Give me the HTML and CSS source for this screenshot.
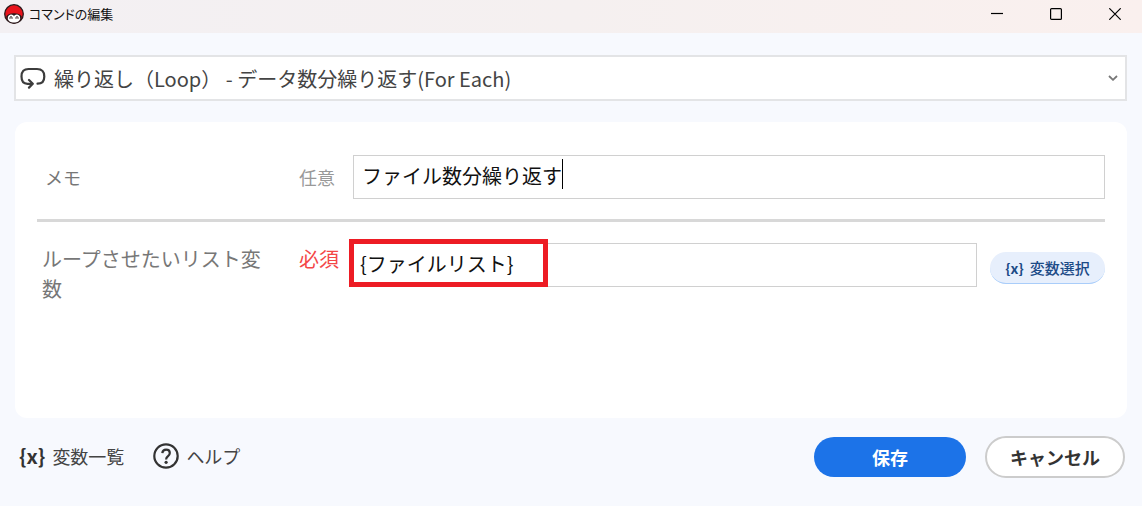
FILE: index.html
```html
<!DOCTYPE html>
<html lang="ja">
<head>
    <meta charset="UTF-8">
    <meta name="viewport" content="width=device-width, initial-scale=1.0">
    <title>コマンドの編集</title>
    <link rel="stylesheet" href="styles.css">
</head>
<body>
    <header class="titlebar">
        <svg class="app-icon" viewBox="0 0 20 20" aria-hidden="true">
            <circle cx="10" cy="10" r="9.3" fill="#e9141d" stroke="#2b1a1c" stroke-width="1.3"/>
            <path d="M2.200 12.500C4 10.400 6 9.300 10 9.300s6 1.100 7.800 3.200C17.200 16.500 14 19.300 10 19.300s-7.200-2.800-7.800-6.800z" fill="#2b1a1c"/>
            <path d="M3.800 14.200c0-4.600 5.300-4.800 6.200-1.900.9-2.900 6.200-2.700 6.200 1.900 0 2.700-3 4.300-6.200 4.300s-6.200-1.600-6.200-4.300z" fill="#fff"/>
            <path d="M6 14.800v-1.100c0-1.500 2-1.500 2 0v1.100M12 14.800v-1.100c0-1.500 2-1.500 2 0v1.100" fill="none" stroke="#2b1a1c"/>
        </svg>
        <h1 class="titlebar-text">コマンドの編集</h1>
        <div class="window-controls">
            <button type="button" class="window-button" aria-label="最小化">
                <svg viewBox="0 0 12 12"><path d="M0 5.500h12"/></svg>
            </button>
            <button type="button" class="window-button" aria-label="最大化">
                <svg viewBox="0 0 12 12"><rect x=".6" y=".6" width="10.800" height="10.800" rx="1"/></svg>
            </button>
            <button type="button" class="window-button" aria-label="閉じる">
                <svg viewBox="0 0 12 12"><path d="M.3.3l11.400 11.400M11.700.3L.3 11.700"/></svg>
            </button>
        </div>
    </header>

    <main class="content">
        <div class="command-select">
            <svg class="loop-icon" viewBox="0 0 26 22" aria-hidden="true">
                <path d="M12 16.800H7.500C3.600 16.800 1.500 14 1.500 9.500 1.500 4.500 4 2 8.500 2h8.500c4.700 0 7.300 2.600 7.300 7.400 0 4.600-2.300 7.300-6.800 7.300"/>
                <path d="M9 13l3.800 3.800L9 20.600"/>
            </svg>
            <select class="command-list" aria-label="コマンド">
                <option>繰り返し（Loop） - データ数分繰り返す(For Each)</option>
            </select>
            <svg class="chevron" viewBox="0 0 10 6" aria-hidden="true"><path d="M1 1l4 3.800L9 1"/></svg>
        </div>

        <section class="card">
            <div class="field-row memo-row">
                <label class="field-label" for="memo">メモ</label>
                <span class="field-tag">任意</span>
                <div class="input-wrap">
                    <input class="field-input" id="memo" type="text" value="ファイル数分繰り返す">
                    <span class="caret"></span>
                </div>
            </div>
            <hr class="divider">
            <div class="field-row list-row">
                <label class="field-label" for="list-variable">ループさせたいリスト変数</label>
                <span class="field-tag required">必須</span>
                <div class="input-wrap">
                    <input class="field-input" id="list-variable" type="text" value="{ファイルリスト}">
                    <span class="highlight"></span>
                </div>
                <button type="button" class="variable-button"><span class="braces">{x}</span>変数選択</button>
            </div>
        </section>

        <footer class="footer">
            <button type="button" class="link-button"><span class="braces">{x}</span>変数一覧</button>
            <button type="button" class="link-button help-button">
                <svg class="help-icon" viewBox="0 0 26 26" aria-hidden="true">
                    <circle cx="13" cy="13" r="11.700"/>
                    <path d="M9.300 10.200c.2-2.200 1.700-3.500 3.800-3.500 2.200 0 3.700 1.300 3.700 3.200 0 1.500-.8 2.300-1.800 3.200-1.200 1-1.900 1.700-1.900 3.300"/>
                    <circle class="help-dot" cx="13.100" cy="19.300" r="1.600"/>
                </svg>ヘルプ
            </button>
            <button type="submit" class="button save-button">保存</button>
            <button type="button" class="button cancel-button">キャンセル</button>
        </footer>
    </main>
</body>
</html>
```
FILE: styles.css
```css
* {
    box-sizing: border-box;
}

body {
    margin: 0;
    min-height: 100vh;
    display: flex;
    flex-direction: column;
    background-color: #f7f9fe;
    color: #444;
    font-family: "Noto Sans CJK JP", sans-serif;
    font-size: 20px;
}

button,
input,
select {
    font-family: inherit;
    color: inherit;
}

button {
    cursor: pointer;
}

/* タイトルバー */
.titlebar {
    display: flex;
    align-items: center;
    height: 33px;
    padding: 0 4px;
    background: linear-gradient(to right, #f3f0f3, #f5f0f0 50%, #faf0ee);
    color: #111;
}

.app-icon {
    width: 20px;
    height: 20px;
    margin: 0 5px 6px 0;
}

.titlebar-text {
    margin: 0 0 6px;
    font-size: 13px;
    font-weight: 400;
    line-height: 20px;
    font-feature-settings: "palt";
}

.window-controls {
    display: flex;
    gap: 14px;
    margin-left: auto;
    margin-bottom: 5px;
}

.window-button {
    width: 45px;
    height: 28px;
    padding: 0 16px;
    border: 0;
    background: none;
}

.window-button svg {
    display: block;
    width: 12px;
    height: 12px;
    fill: none;
    stroke: #000;
    stroke-width: 1.2;
}

.content {
    flex: 1;
    display: flex;
    flex-direction: column;
    padding: 22px 15px 28px;
}

/* コマンド選択 */
.command-select {
    position: relative;
    margin-left: -1px;
}

.command-list {
    display: block;
    width: 100%;
    height: 46px;
    padding: 0 38px;
    border: 2px solid #e3e4e6;
    border-radius: 0;
    background: #fff;
    font-size: 20px;
    appearance: none;
}

.loop-icon {
    position: absolute;
    left: 6px;
    top: 12px;
    width: 26px;
    height: 22px;
    fill: none;
    stroke: #3c3c3c;
    stroke-width: 2.2;
    stroke-linecap: round;
    stroke-linejoin: round;
    pointer-events: none;
}

.chevron {
    position: absolute;
    right: 9px;
    top: 20px;
    width: 10px;
    height: 6px;
    fill: none;
    stroke: #777;
    stroke-width: 1.8;
    pointer-events: none;
}

/* 入力欄 */
.card {
    flex: 1;
    margin-top: 21px;
    padding: 33px 22px;
    border-radius: 12px;
    background: #fff;
}

.field-row {
    display: flex;
    color: #777;
}

.memo-row {
    align-items: center;
}

.field-label {
    width: 262px;
    padding: 0 36px 0 5px;
    line-height: 30px;
}

.field-tag {
    width: 54px;
    line-height: 30px;
}

.list-row .field-label,
.list-row .field-tag {
    padding-top: 1px;
}

.memo-row .field-label,
.memo-row .field-tag {
    font-size: 18px;
}

.memo-row .field-label {
    padding-left: 8px;
}

.memo-row .field-tag {
    color: #999;
}

.field-tag.required {
    color: #f44747;
}

.input-wrap {
    position: relative;
    flex: 1;
}

.field-input {
    display: block;
    width: 100%;
    height: 44px;
    padding: 0 8px 4px;
    border: 1px solid #d0d0d0;
    outline: 0;
    background: #fff;
    color: #111;
    font-size: 20px;
}

.list-row .field-input {
    padding: 0 6px 4px;
}

.caret {
    position: absolute;
    left: 209px;
    top: 4px;
    width: 1px;
    height: 30px;
    background: #000;
}

.highlight {
    position: absolute;
    left: -4px;
    top: -4px;
    width: 199px;
    height: 48px;
    border: 5px solid #ed1c24;
    pointer-events: none;
}

.divider {
    height: 3px;
    margin: 20px 0 21px;
    border: 0;
    background: #d8d8d8;
}

.variable-button {
    display: flex;
    align-items: center;
    justify-content: center;
    gap: 6px;
    width: 115px;
    height: 32px;
    margin: 9px 0 0 13px;
    padding: 0;
    border: 0;
    border-bottom: 1px solid #a9cdfa;
    border-radius: 16px;
    background: #e7effc;
    color: #1c4b87;
    font-size: 15px;
    font-weight: 500;
}

.braces {
    font-weight: 700;
}

.variable-button .braces {
    font-size: 14px;
}

/* フッター */
.footer {
    display: flex;
    align-items: center;
    margin-top: 18px;
}

.link-button {
    display: flex;
    align-items: center;
    gap: 7px;
    padding: 0 0 2px 4px;
    border: 0;
    background: none;
    font-size: 18px;
}

.link-button .braces {
    font-size: 20px;
    line-height: 26px;
    color: #333;
}

.help-button {
    margin-left: 25px;
}

.help-icon {
    width: 26px;
    height: 26px;
    fill: none;
    stroke: #333;
    stroke-width: 2.2;
}

.help-icon .help-dot {
    fill: #333;
    stroke: none;
}

.button {
    height: 42px;
    padding: 0;
    border-radius: 21px;
    font-size: 18px;
    font-weight: 700;
}

.save-button {
    width: 152px;
    height: 40px;
    margin-left: auto;
    border: 0;
    background: #1c73e8;
    color: #fff;
}

.cancel-button {
    width: 140px;
    margin: 0 2px 0 19px;
    border: 2px solid #ccc;
    background: #fff;
    color: #333;
}
```
